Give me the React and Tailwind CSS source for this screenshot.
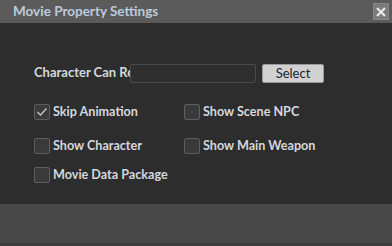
function Check({ label, checked }) {
    return (
        <label className="flex items-center h-[16px]">
            <span className="w-[16px] h-[16px] border border-[#5e5e5e] bg-[#3a3a3a] rounded-[2px] flex items-center justify-center">
                {checked && (
                    <svg width="12" height="12" viewBox="0 0 12 12">
                        <path d="M1.5 6 L4.5 9 L10.5 2.5" stroke="#c8c8c8" strokeWidth="1.3" fill="none" />
                    </svg>
                )}
            </span>
            <span className="ml-[3px] text-[12.6px] font-bold text-[#d4d8de] leading-none">{label}</span>
        </label>
    )
}

export default function App() {
    return (
        <div className="w-[392px] h-[246px] flex flex-col bg-[#2d2d2d] overflow-hidden" style={{ fontFamily: 'Lato, "Noto Sans", sans-serif' }}>
            <div className="h-[23px] bg-[#5b5b5b] flex items-center justify-between pl-[13px] pr-[3px]">
                <span className="text-[13.5px] font-bold text-[#bccbdb]">Movie Property Settings</span>
                <button className="w-[16px] h-[17px] bg-[#7a7a7a] border border-[#888] flex items-center justify-center">
                    <svg width="12" height="12" viewBox="0 0 12 12">
                        <path d="M2 2 L10 10 M10 2 L2 10" stroke="#e6e6e6" strokeWidth="2.4" />
                    </svg>
                </button>
            </div>
            <div className="h-[181px] bg-[#2d2d2d] pl-[34px]">
                <div className="flex items-center mt-[40px] h-[20px]">
                    <span className="w-[96px] overflow-hidden whitespace-nowrap text-[13px] font-bold text-[#d4d8de]">Character Can Replace</span>
                    <div className="w-[126px] h-[19px] border border-[#4a4a4a] bg-[#2f2f2f] rounded-[2px]"></div>
                    <button className="ml-[6px] w-[62px] h-[19px] bg-[#d0d0d0] border border-[#999] rounded-[2px] text-[13px] text-[#1c2430] leading-none">Select</button>
                </div>
                <div className="grid grid-cols-[150px_auto] gap-y-[18px] mt-[21px]">
                    <Check label="Skip Animation" checked />
                    <Check label="Show Scene NPC" />
                    <Check label="Show Character" />
                    <Check label="Show Main Weapon" />
                </div>
                <div className="mt-[13px]">
                    <Check label="Movie Data Package" />
                </div>
            </div>
            <div className="h-[39px] bg-[#474747]"></div>
            <div className="h-[3px] bg-[#3c3c3c]"></div>
        </div>
    )
}
